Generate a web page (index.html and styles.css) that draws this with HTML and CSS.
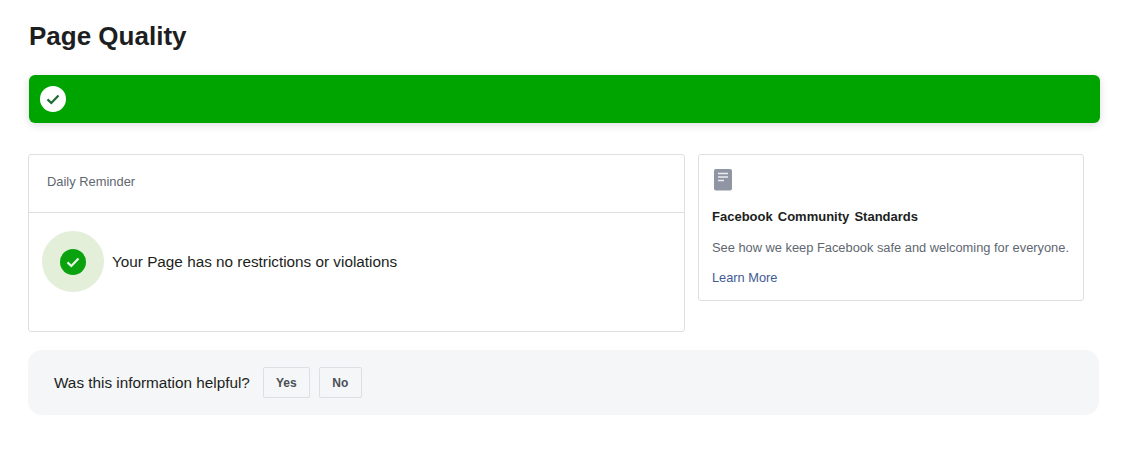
FILE: index.html
```html
<!DOCTYPE html>
<html lang="en">
<head>
<meta charset="utf-8">
<title>Page Quality</title>
<link rel="stylesheet" href="styles.css">
</head>
<body>
<main class="page">
  <h1 class="title">Page Quality</h1>
  <div class="banner">
    <svg class="banner-icon" width="26" height="26" viewBox="0 0 26 26"><circle cx="13" cy="13" r="13" fill="#fff"/><path d="M7.500 13.400l3.800 3.600L18.500 9.500" fill="none" stroke="#1c6b32" stroke-width="2.200"/></svg>
  </div>
  <div class="columns">
    <section class="card reminder">
      <header class="reminder-head">Daily Reminder</header>
      <div class="reminder-body">
        <div class="halo">
          <svg width="26" height="26" viewBox="0 0 26 26"><circle cx="13" cy="13" r="13" fill="#0aa30f"/><path d="M7.500 13.400l3.800 3.600L18.500 9.500" fill="none" stroke="#e6f5e4" stroke-width="2.200"/></svg>
        </div>
        <p class="reminder-text">Your Page has no restrictions or violations</p>
      </div>
    </section>
    <aside class="card standards">
      <svg class="book" width="18" height="22" viewBox="0 0 18 22"><rect width="18" height="21.500" rx="2" fill="#8f95a3"/><path d="M4 4.500h10M4 8h10M4 11.500h6" stroke="#eceef2" stroke-width="1.400"/></svg>
      <h2 class="standards-title">Facebook Community Standards</h2>
      <p class="standards-text">See how we keep Facebook safe and welcoming for everyone.</p>
      <a class="standards-link" href="#">Learn More</a>
    </aside>
  </div>
  <div class="feedback">
    <span class="feedback-label">Was this information helpful?</span>
    <button class="btn btn-yes" type="button">Yes</button>
    <button class="btn btn-no" type="button">No</button>
  </div>
</main>
</body>
</html>
```
FILE: styles.css
```css
* { box-sizing: border-box; }
html, body { margin: 0; background: #fff; }
body { font-family: "Liberation Sans", Arial, sans-serif; color: #1c1e21; }
.page { width: 1126px; height: 470px; padding: 21px 0 0 28px; overflow: hidden; }
.title { margin: 0 0 0 1px; font-size: 26px; line-height: 30px; font-weight: 700; color: #1c1e21; }
.banner { display: flex; align-items: center; width: 1071px; height: 48px; margin: 24px 0 0 1px; padding: 0 11px; background: #00a400; border-radius: 6px; box-shadow: 0 2px 8px rgba(0,0,0,.14); }
.banner-icon { display: block; }
.columns { display: flex; align-items: flex-start; gap: 13px; margin-top: 31px; }
.card { background: #fff; border: 1px solid #dddfe2; border-radius: 3px; }
.reminder { width: 657px; height: 178px; }
.reminder-head { height: 58px; padding: 0 18px; border-bottom: 1px solid #dddfe2; font-size: 12.900px; line-height: 54px; color: #606770; }
.reminder-body { display: flex; align-items: center; padding: 18px 13px; }
.halo { display: flex; align-items: center; justify-content: center; width: 62px; height: 61px; border-radius: 50%; background: #e3efd9; }
.reminder-text { margin: 0 0 0 8px; font-size: 15.300px; line-height: 18px; color: #1c1e21; }
.standards { width: 386px; height: 147px; padding: 14px 13px 0; }
.book { display: block; margin-left: 2px; }
.standards-title { margin: 18px 0 0; font-size: 13px; line-height: 16px; font-weight: 700; color: #1c1e21; word-spacing: 1.500px; }
.standards-text { margin: 15px 0 0; font-size: 12.850px; line-height: 16px; color: #606770; white-space: nowrap; }
.standards-link { display: block; margin-top: 14px; font-size: 12.800px; line-height: 16px; color: #3f5a94; text-decoration: none; }
.feedback { display: flex; align-items: center; width: 1071px; height: 65px; margin-top: 18px; padding: 0 26px; background: #f5f6f7; border-radius: 14px; }
.feedback-label { font-size: 15.300px; color: #1c1e21; margin-right: 13px; }
.btn { height: 31px; padding: 0; background: #f5f6f7; border: 1px solid #dddfe2; border-radius: 2px; font: 700 12px "Liberation Sans", Arial, sans-serif; color: #4b4f56; }
.btn-yes { width: 47px; margin-right: 9px; }
.btn-no { width: 43px; }
```
